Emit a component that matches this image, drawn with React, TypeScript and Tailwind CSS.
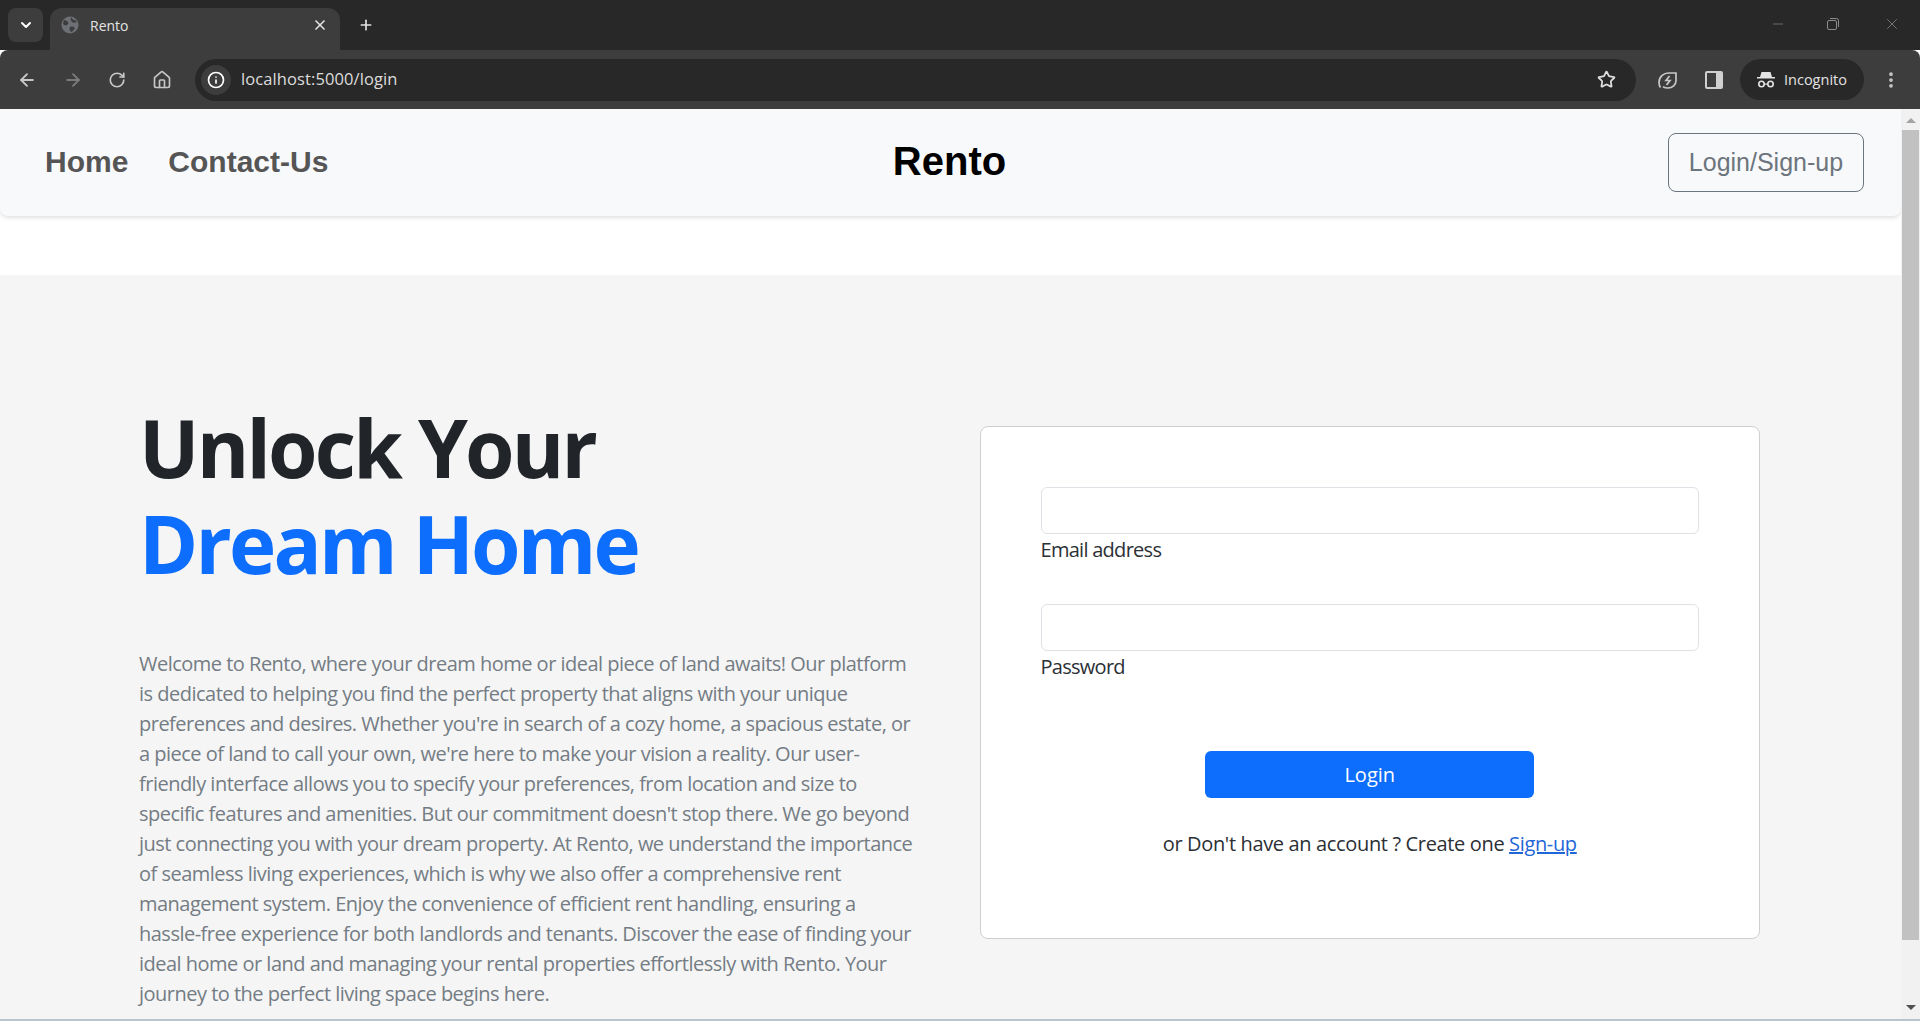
import { ArrowLeft, ArrowRight, ChevronDown, EllipsisVertical, Home, Info, Minus, Plus, RotateCw, Star, X } from "lucide-react";

const paragraph = [
  "Welcome to Rento, where your dream home or ideal piece of land awaits! Our platform",
  "is dedicated to helping you find the perfect property that aligns with your unique",
  "preferences and desires. Whether you're in search of a cozy home, a spacious estate, or",
  "a piece of land to call your own, we're here to make your vision a reality. Our user-",
  "friendly interface allows you to specify your preferences, from location and size to",
  "specific features and amenities. But our commitment doesn't stop there. We go beyond",
  "just connecting you with your dream property. At Rento, we understand the importance",
  "of seamless living experiences, which is why we also offer a comprehensive rent",
  "management system. Enjoy the convenience of efficient rent handling, ensuring a",
  "hassle-free experience for both landlords and tenants. Discover the ease of finding your",
  "ideal home or land and managing your rental properties effortlessly with Rento. Your",
  "journey to the perfect living space begins here.",
];

function BrowserChrome() {
  return (
    <div className="shrink-0 font-['Open_Sans',sans-serif]">
      {/* Tab strip */}
      <div className="h-[50px] bg-[#282828] flex items-end pl-2 text-[#c7c7c7]">
        <div className="self-start mt-2 w-[35px] h-[34px] rounded-lg bg-[#3d3d3d] flex items-center justify-center text-white">
          <ChevronDown size={16} strokeWidth={3} />
        </div>
        <div className="ml-[7px] w-[290px] h-[42px] rounded-t-xl bg-[#3d3d3d] flex items-center pl-[11px] pr-3 pb-[8px]">
          <svg width="18" height="18" viewBox="0 0 18 18" className="shrink-0">
            <circle cx="9" cy="9" r="8.500" fill="#6d7075" />
            <path d="M3 4c2 0 3 1 4 2s0 2-1 3-3 0-4-1zM10 1c1 2 2 3 4 3l2 2c-2 1-4 1-5 0s-2-3-1-5zM9 11c2-1 4 0 5 1l-3 4c-2 0-3-3-2-5z" fill="#3d3d3d" />
          </svg>
          <span className="ml-[11px] text-[14px] text-[#e3e3e3]">Rento</span>
          <X size={16} strokeWidth={2.5} className="ml-auto text-[#e3e3e3]" />
        </div>
        <div className="self-start mt-[17px] ml-[18px] text-[#e3e3e3]">
          <Plus size={16} strokeWidth={2.5} />
        </div>
        <div className="ml-auto self-start flex items-center mt-[15px] mr-[19px] text-[#8c8c8c]">
          <Minus size={16} strokeWidth={1} className="mr-[40px]" />
          <svg width="14" height="14" viewBox="0 0 14 14" fill="none" stroke="currentColor" className="mr-[43px]">
            <rect x="1.500" y="3.500" width="9" height="9" rx="1.500" />
            <path d="M4 1.500h6.500a2 2 0 0 1 2 2V10" />
          </svg>
          <X size={18} strokeWidth={1} />
        </div>
      </div>

      {/* Toolbar */}
      <div className="h-[59px] bg-[#3d3d3d] flex items-center text-[#c7c7c7] rounded-t-lg">
        <ArrowLeft size={20} strokeWidth={2.25} className="ml-[17px]" />
        <ArrowRight size={20} strokeWidth={2.25} className="ml-[26px] text-[#7b7b7b]" />
        <RotateCw size={18} strokeWidth={2.25} className="ml-[25px]" />
        <Home size={20} strokeWidth={2} className="ml-[26px]" />
        <div className="ml-[23px] w-[1441px] h-[42px] rounded-full bg-[#282828] flex items-center pl-[6px] pr-[20px]">
          <div className="w-[30px] h-[30px] rounded-full bg-[#3d3d3d] flex items-center justify-center text-white">
            <Info size={18} strokeWidth={2.25} />
          </div>
          <span className="ml-[10px] text-[16.5px] text-[#dcdcdc] tracking-[0.1px]">localhost:5000/login</span>
          <Star size={19} strokeWidth={2.25} className="ml-auto text-[#dedede]" />
        </div>
        <svg width="20" height="20" viewBox="0 0 20 20" fill="none" stroke="currentColor" strokeWidth="1.7" className="ml-[22px]">
          <path d="M2.500 17.500c-.8-1-1.500-2.500-1.500-5C1 7 5.500 3 10.500 3h7.500v7.500c0 4.500-3.500 7.500-8 7.500-2 0-3.500-.4-5-1.300" />
          <path d="M11.500 6l-3.500 4.500h4l-3.500 4.500" />
        </svg>
        <div className="ml-[27px] w-[18px] h-[18px] rounded-[2px] bg-[#d0d0d0] p-[2px] pr-[7px]">
          <div className="w-full h-full bg-[#3d3d3d]" />
        </div>
        <div className="ml-[17px] w-[124px] h-[41px] rounded-full bg-[#282828] flex items-center pl-[16px] text-[#e3e3e3]">
          <svg width="20" height="20" viewBox="0 0 20 20" fill="currentColor">
            <path d="M5.500 2h9l1.500 5h3v1.500H1V7h3z" />
            <circle cx="5.500" cy="14" r="2.700" fill="none" stroke="currentColor" strokeWidth="1.600" />
            <circle cx="14.500" cy="14" r="2.700" fill="none" stroke="currentColor" strokeWidth="1.600" />
            <path d="M8 13.500h4v1.200H8z" />
          </svg>
          <span className="ml-[8px] text-[14.5px]">Incognito</span>
        </div>
        <EllipsisVertical size={20} strokeWidth={2.5} className="ml-[17px]" />
      </div>
    </div>
  );
}

function Scrollbar() {
  return (
    <div className="w-[19px] shrink-0 bg-[#f1f1f1] flex flex-col items-center">
      <div className="mt-[9px] w-0 h-0 border-x-[5px] border-x-transparent border-b-[5px] border-b-[#a3a3a3]" />
      <div className="mt-[7px] w-[17px] h-[810px] bg-[#c1c1c1]" />
      <div className="mt-auto mb-[9px] w-0 h-0 border-x-[5px] border-x-transparent border-t-[5px] border-t-[#505050]" />
    </div>
  );
}

export default function App() {
  return (
    <div className="h-screen flex flex-col overflow-hidden bg-white">
      <BrowserChrome />
      <div className="flex flex-1 min-h-0 border-b-2 border-[#b8c4d0]">
        <div className="flex-1 min-w-0 overflow-hidden font-['Open_Sans',sans-serif]">
          <nav className="h-[107px] bg-[#f8f9fa] rounded-b-lg shadow-[0_2px_4px_rgba(0,0,0,0.12)] flex items-center justify-between pl-[45px] pr-[37px] font-['Liberation_Sans',sans-serif]">
            <div className="w-[390px] flex items-center gap-[40px] pb-[3px] text-[30px] font-bold text-[#555555]">
              <a>Home</a>
              <a>Contact-Us</a>
            </div>
            <div className="pb-[3px] text-[40px] font-bold text-black">Rento</div>
            <div className="w-[400px] flex justify-end">
              <button className="w-[196px] h-[59px] rounded-lg border border-[#6c757d] text-[25px] text-[#6c757d]">Login/Sign-up</button>
            </div>
          </nav>

          <main className="mt-[59px] bg-[#f5f5f5] h-[800px] pl-[139px] pr-[141px] grid grid-cols-2 gap-[60px]">
            <div className="pt-[124px]">
              <h1 className="text-[80px] leading-[96px] font-bold text-[#212529] tracking-[-2.8px]">
                Unlock Your
                <br />
                <span className="text-[#0d6efd]">Dream Home</span>
              </h1>
              <p className="mt-[58px] text-[20px] leading-[30px] text-[#747c84] whitespace-nowrap tracking-[-0.51px]">
                {paragraph.map((line) => (
                  <span key={line} className="block">{line}</span>
                ))}
              </p>
            </div>

            <div className="pt-[151px]">
              <form className="h-[513px] bg-white rounded-lg border border-[#cfcfcf] p-[60px] text-[20px] leading-[30px] text-[#2b3035]">
                <input className="block w-full h-[47px] rounded-md border border-[#dee2e6] bg-white" aria-label="Email address" />
                <label className="block h-[30px] pt-px tracking-[-0.72px]">Email address</label>
                <input className="block w-full h-[47px] mt-[40px] rounded-md border border-[#dee2e6] bg-white" aria-label="Password" />
                <label className="block h-[30px] pt-px tracking-[-0.72px]">Password</label>
                <button type="button" className="block mx-auto mt-[70px] w-[329px] h-[47px] rounded-md bg-[#0d6efd] text-white">Login</button>
                <p className="mt-[31px] text-center tracking-[-0.35px]">
                  or Don't have an account ? Create one <a className="text-[#1f66d8] underline">Sign-up</a>
                </p>
              </form>
            </div>
          </main>
        </div>
        <Scrollbar />
      </div>
    </div>
  );
}
